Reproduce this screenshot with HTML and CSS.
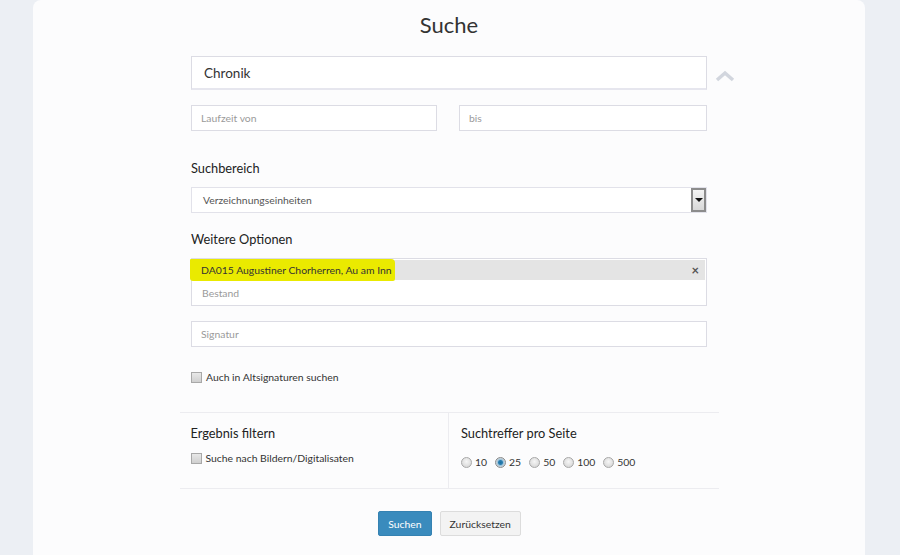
FILE: index.html
```html
<!DOCTYPE html>
<html lang="de">
<head>
    <meta charset="UTF-8">
    <title>Suche</title>
<link rel="stylesheet" href="styles.css">
</head>
<body>
    <div class="card">
        <h1>Suche</h1>
        <form class="search-form">
            <div class="main-row">
                <input class="field field-big" type="text" value="Chronik">
                <span class="collapse-btn">
                    <svg width="20" height="12" viewBox="0 0 20 12"><path d="M2 10 L10 3 L18 10" fill="none" stroke="#d2d6de" stroke-width="3.5"/></svg>
                </span>
            </div>

            <div class="range-row">
                <input class="field" type="text" placeholder="Laufzeit von">
                <input class="field" type="text" placeholder="bis">
            </div>

            <h4 class="label label-first">Suchbereich</h4>
            <div class="select">
                <span>Verzeichnungseinheiten</span>
                <span class="select-btn"><i></i></span>
            </div>

            <h4 class="label">Weitere Optionen</h4>
            <div class="tagbox">
                <div class="tag">
                    <span class="marker">DA015 Augustiner Chorherren, Au am Inn</span>
                    <span class="tag-remove">&times;</span>
                </div>
                <div class="tag-input">Bestand</div>
            </div>

            <input class="field field-sig" type="text" placeholder="Signatur">

            <label class="check check-alt"><input type="checkbox"> Auch in Altsignaturen suchen</label>
        </form>

        <div class="options">
            <div class="opt-col">
                <h4 class="label">Ergebnis filtern</h4>
                <label class="check"><input type="checkbox"> Suche nach Bildern/Digitalisaten</label>
            </div>
            <div class="opt-col opt-right">
                <h4 class="label">Suchtreffer pro Seite</h4>
                <div class="radios">
                    <label><input type="radio" name="pp"> 10</label>
                    <label><input type="radio" name="pp" checked> 25</label>
                    <label><input type="radio" name="pp"> 50</label>
                    <label><input type="radio" name="pp"> 100</label>
                    <label><input type="radio" name="pp"> 500</label>
                </div>
            </div>
        </div>

        <div class="buttons">
            <button class="btn btn-primary">Suchen</button>
            <button class="btn">Zurücksetzen</button>
        </div>
    </div>
</body>
</html>
```

FILE: styles.css
```css
* {
    box-sizing: border-box;
}

body {
    margin: 0;
    background-color: #eceff4;
    font-family: Lato, "Liberation Sans", sans-serif;
    color: #333;
}

.card {
    width: 832px;
    margin-left: 33px;
    height: 570px;
    background-color: #fcfcfd;
    border-radius: 8px;
    padding-top: 12px;
}

h1 {
    margin: 0;
    text-align: center;
    font-size: 22px;
    line-height: 26px;
    font-weight: normal;
    color: #333;
}

.search-form {
    width: 516px;
    margin: 18px auto 0;
}

.field {
    display: block;
    width: 100%;
    height: 26px;
    border: 1px solid #dcdce4;
    background: #fff;
    font-family: inherit;
    font-size: 10.4px;
    color: #333;
    padding: 0 9px;
    outline: none;
}

.field::placeholder {
    color: #9a9a9a;
}

.main-row {
    position: relative;
}

.field-big {
    height: 34px;
    font-size: 13.5px;
    padding: 0 12px;
    border-bottom: 2px solid #e6e6ee;
}

.collapse-btn {
    position: absolute;
    left: 524px;
    top: 10px;
}

.range-row {
    display: flex;
    gap: 22px;
    margin-top: 15px;
}

.range-row .field {
    width: 246px;
}

.range-row .field:last-child {
    width: 248px;
}

.label {
    margin: 16px 0 9px;
    font-size: 12.8px;
    line-height: 20px;
    font-weight: normal;
    color: #222;
}

.label-first {
    margin-top: 27px;
}

.select {
    display: flex;
    align-items: center;
    justify-content: space-between;
    height: 26px;
    border: 1px solid #e2e2ea;
    background: #fff;
    font-size: 10.4px;
    color: #555;
    padding-left: 11px;
}

.select-btn {
    width: 15px;
    height: 24px;
    border: 2px solid #8c8c8c;
    background: linear-gradient(#f4f4f4, #d8d8d8);
    display: flex;
    align-items: center;
    justify-content: center;
}

.select-btn i {
    width: 0;
    height: 0;
    border-left: 4px solid transparent;
    border-right: 4px solid transparent;
    border-top: 4px solid #111;
}

.tagbox {
    height: 48px;
    border: 1px solid #dcdce4;
    background: #fff;
    padding: 1px;
}

.tag {
    display: flex;
    justify-content: space-between;
    align-items: center;
    height: 20px;
    background-color: #e4e4e4;
    font-size: 10.4px;
    color: #333;
}

.marker {
    background-color: #eaea00;
    margin-left: -3px;
    padding: 0 3px 0 11px;
    line-height: 22px;
    border-radius: 1px 4px 2px 3px;
}

.tag-remove {
    font-size: 13px;
    font-weight: bold;
    color: #555;
    margin-right: 6px;
}

.tag-input {
    font-size: 10.4px;
    color: #9a9a9a;
    padding: 7px 9px 0;
}

.field-sig {
    margin-top: 15px;
}

.check {
    display: flex;
    align-items: center;
    gap: 4px;
    font-size: 10.4px;
    color: #333;
}

.check-alt {
    margin-top: 23px;
    height: 14px;
}

input[type="checkbox"],
input[type="radio"] {
    appearance: none;
    margin: 0;
    width: 11px;
    height: 11px;
    border: 1px solid #a8a8a8;
    background: linear-gradient(#e8e8e8, #cfcfcf);
}

input[type="radio"] {
    border-radius: 50%;
    background: radial-gradient(circle at 50% 40%, #f6f6f6, #d0d0d0);
}

input[type="radio"]:checked {
    background: radial-gradient(circle, #1d6fa0 0, #2a7fb2 2px, #9ec3da 3px, #e0e0e0 5px);
    border-color: #8a8a8a;
}

.options {
    display: flex;
    width: 539px;
    margin: 28px auto 0;
    border-top: 1px solid #ececf0;
    border-bottom: 1px solid #ececf0;
    height: 77px;
}

.opt-col {
    flex: 1;
    padding: 10px 11px 0;
}

.opt-col .label {
    margin: 0 0 9px;
}

.opt-right {
    border-left: 1px solid #ececf0;
    padding-left: 12px;
}

.radios {
    display: flex;
    gap: 8px;
    font-size: 10.4px;
    margin-top: 13px;
}

.radios label {
    display: flex;
    align-items: center;
    gap: 3px;
}

.buttons {
    display: flex;
    justify-content: center;
    gap: 8px;
    margin-top: 22px;
    padding-left: 1px;
}

.btn {
    height: 25px;
    padding: 0 9px;
    font-family: inherit;
    font-size: 10.4px;
    border: 1px solid #dcdcdc;
    border-radius: 2px;
    background-color: #f3f3f3;
    color: #333;
}

.btn-primary {
    background-color: #3a8bbd;
    border-color: #3582b2;
    color: #fff;
}
```
